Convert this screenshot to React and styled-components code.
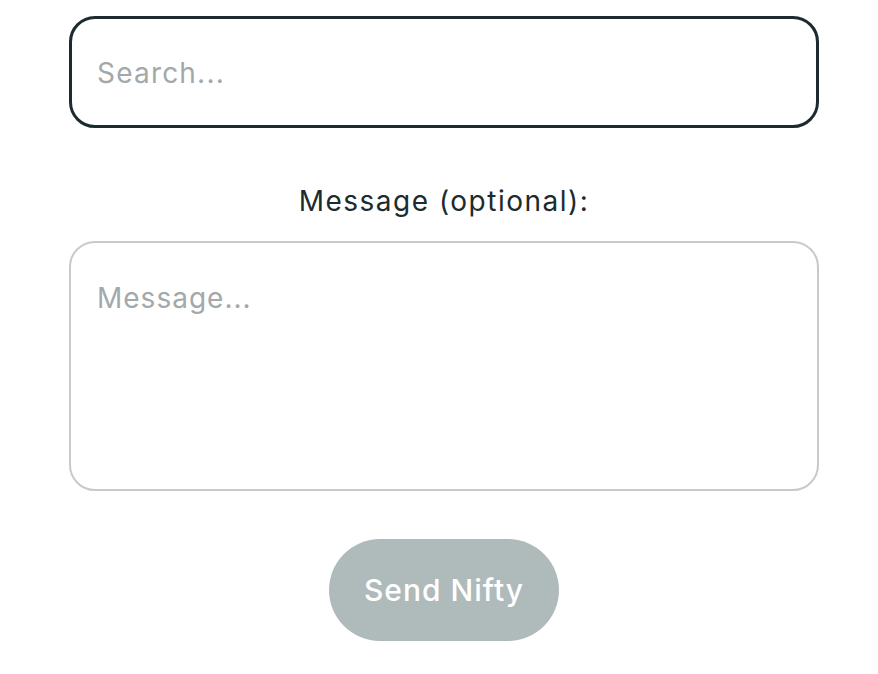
import styled, { createGlobalStyle } from 'styled-components';

const GlobalStyle = createGlobalStyle`
  html, body {
    margin: 0;
    padding: 0;
    background: #ffffff;
  }
  body {
    font-family: Inter, "Noto Sans", sans-serif;
    color: #1c2b2e;
  }
`;

/* ----------- Form ----------- */

const FormCont = styled.form`
  width: 750px;
  margin-left: 69px;
  padding-top: 16px;
  display: flex;
  flex-direction: column;
  align-items: center;
`;

const SearchInput = styled.input`
  box-sizing: border-box;
  width: 100%;
  height: 112px;
  border: 3px solid #1c2b2e;
  border-radius: 26px;
  padding: 2px 25px 0;
  font-family: Inter, "Noto Sans", sans-serif;
  font-size: 28px;
  letter-spacing: 1.2px;
  color: #1c2b2e;
  outline: none;

  &::placeholder {
    color: #a3a8aa;
  }
`;

const Label = styled.label`
  margin-top: 56px;
  font-size: 28px;
  line-height: 34px;
  letter-spacing: 1.5px;
  color: #1c2b2e;
`;

const MessageArea = styled.textarea`
  box-sizing: border-box;
  width: 100%;
  height: 250px;
  margin-top: 23px;
  border: 2px solid #c9c9c9;
  border-radius: 26px;
  padding: 38px 26px;
  font-family: Inter, "Noto Sans", sans-serif;
  font-size: 28px;
  line-height: 34px;
  letter-spacing: 1px;
  resize: none;
  outline: none;

  &::placeholder {
    color: #a3a8aa;
  }
`;

const SendBtn = styled.button`
  margin-top: 48px;
  width: 230px;
  height: 102px;
  border: none;
  border-radius: 51px;
  background-color: #afbaba;
  color: #ffffff;
  font-family: Inter, "Noto Sans", sans-serif;
  font-size: 30px;
  font-weight: 500;
  letter-spacing: 1px;
  cursor: default;
`;

function App() {
  return (
    <>
      <GlobalStyle />
      <FormCont onSubmit={(e) => e.preventDefault()}>
        <SearchInput type="text" placeholder="Search..." />
        <Label htmlFor="message">Message (optional):</Label>
        <MessageArea id="message" placeholder="Message..." />
        <SendBtn type="submit" disabled>Send Nifty</SendBtn>
      </FormCont>
    </>
  );
}

export default App;
